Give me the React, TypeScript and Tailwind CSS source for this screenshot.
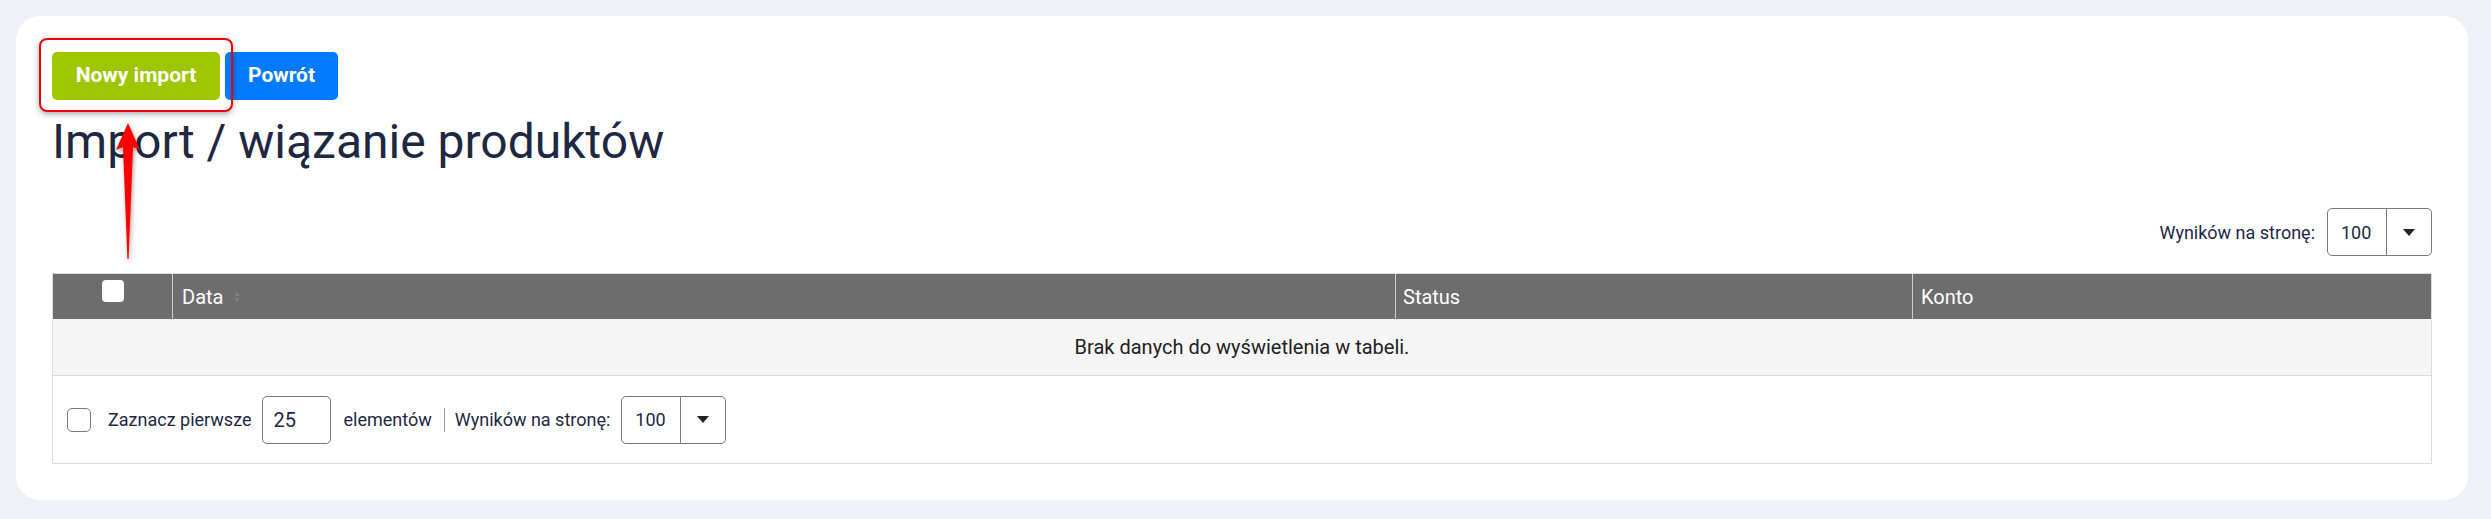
import React from "react";

function Caret() {
  return (
    <svg width="12" height="7" viewBox="0 0 12 7">
      <path d="M0 0 L12 0 L6 7 Z" fill="#222" />
    </svg>
  );
}

function PerPage({ gap }: { gap: string }) {
  return (
    <div className={`flex items-center ${gap}`}>
      <span className="text-[18px] text-[#1e2843]">Wyników na stronę:</span>
      <div className="flex h-[48px] w-[105px] items-stretch rounded-[5px] border border-[#7a7a7a] bg-white">
        <div className="flex w-[58px] items-center pl-[13px] text-[18px] text-[#1e2843]">100</div>
        <div className="w-px bg-[#7a7a7a]" />
        <div className="flex flex-1 items-center justify-center">
          <Caret />
        </div>
      </div>
    </div>
  );
}

export default function App() {
  return (
    <div
      className="relative min-h-[519px] bg-[#eef2f7] pt-[16px] pb-[19px]"
      style={{ fontFamily: "Roboto, 'Liberation Sans', sans-serif" }}
    >
      <div className="ml-[16px] w-[2452px] rounded-[24px] bg-white p-[36px]">
        <div className="relative flex gap-[5px]">
          <button className="h-[48px] w-[168px] rounded-[5px] bg-[#a0c603] text-[21px] font-bold text-white">
            Nowy import
          </button>
          <button className="h-[48px] w-[113px] rounded-[5px] bg-[#007bff] text-[21px] font-bold text-white">
            Powrót
          </button>
          <div className="pointer-events-none absolute left-[-13px] top-[-14px] h-[74px] w-[194px] rounded-[8px] border-2 border-[#f00000] shadow-[0_2px_6px_rgba(0,0,0,0.35)]" />
        </div>

        <h1 className="mt-[14px] text-[48px] leading-[55px] font-normal text-[#1e2843]">
          Import / wiązanie produktów
        </h1>

        <div className="mt-[39px] flex justify-end">
          <PerPage gap="gap-[12px]" />
        </div>

        <div className="mt-[17px] border border-[#dcdcdc]">
          <div className="grid h-[45px] grid-cols-[119px_1223px_517px_1fr] bg-[#6d6d6d] text-[20px] text-white">
            <div className="flex justify-center pt-[6px]">
              <div className="h-[22px] w-[22px] rounded-[4px] bg-white" />
            </div>
            <div className="flex items-center gap-[10px] border-l border-[#cfcfcf] pl-[9px]">
              <span>Data</span>
              <svg width="8" height="12" viewBox="0 0 8 12">
                <path d="M4 1 L7 5 L1 5 Z M4 11 L7 7 L1 7 Z" fill="#7f7f7f" />
              </svg>
            </div>
            <div className="flex items-center border-l border-[#cfcfcf] pl-[7px]">Status</div>
            <div className="flex items-center border-l border-[#cfcfcf] pl-[8px]">Konto</div>
          </div>
          <div className="flex h-[57px] items-center justify-center border-b border-[#dcdcdc] bg-[#f5f5f5] text-[20px] text-[#222]">
            Brak danych do wyświetlenia w tabeli.
          </div>
          <div className="flex h-[87px] items-center pl-[14px] text-[18px] text-[#1e2843]">
            <div className="h-[24px] w-[24px] rounded-[5px] border border-[#7a7a7a]" />
            <span className="ml-[17px]">Zaznacz pierwsze</span>
            <div className="ml-[11px] flex h-[48px] w-[69px] items-center rounded-[5px] border border-[#7a7a7a] pl-[10px] text-[20px]">
              25
            </div>
            <span className="ml-[12px]">elementów</span>
            <div className="ml-[12px] h-[24px] w-px bg-[#999]" />
            <div className="ml-[10px]">
              <PerPage gap="gap-[11px]" />
            </div>
          </div>
        </div>
      </div>

      <svg
        className="pointer-events-none absolute left-[110px] top-[116px]"
        width="40"
        height="152"
        viewBox="0 0 40 152"
        style={{ filter: "drop-shadow(1px 2px 2px rgba(0,0,0,0.4))" }}
      >
        <path d="M18 7 L30 34 L23 31 L18.6 143 L17.4 143 L13 31 L6 34 Z" fill="#ff0000" />
      </svg>
    </div>
  );
}
